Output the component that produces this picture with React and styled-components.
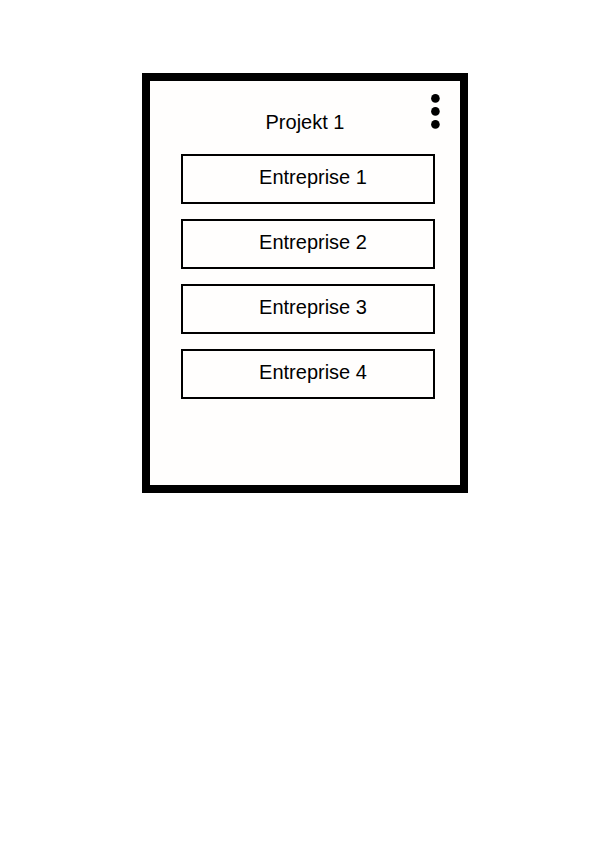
import React from "react";
import styled, { createGlobalStyle } from "styled-components";

const GlobalStyle = createGlobalStyle`
  *, *::before, *::after { box-sizing: border-box; }
  body {
    margin: 0;
    background: #ffffff;
    color: #000000;
    font-family: "Liberation Sans", Arial, sans-serif;
  }
`;

const Page = styled.main`
  display: flex;
  justify-content: center;
  padding: 73px 16px 16px 31px;
`;

const Card = styled.section`
  width: 100%;
  max-width: 326px;
  min-height: 420px;
  padding: 12px 20px 80px;
  border: 8px solid #000000;
  background: #fffefd;
`;

const CardHeader = styled.header`
  display: grid;
  grid-template-columns: 1fr auto 1fr;
  align-items: start;
  margin-bottom: 20px;
`;

const Title = styled.h1`
  grid-column: 2;
  margin: 0;
  padding-top: 17px;
  font-size: 20px;
  line-height: 24px;
  font-weight: 400;
`;

const MenuButton = styled.button`
  justify-self: end;
  display: flex;
  padding: 0;
  border: 0;
  background: transparent;
  color: inherit;
  cursor: pointer;
`;

const EntryList = styled.ul`
  display: flex;
  flex-direction: column;
  gap: 15px;
  margin: 0;
  padding: 0 5px 0 11px;
  list-style: none;
`;

const EntryButton = styled.button`
  display: block;
  width: 100%;
  height: 50px;
  padding: 0 0 4px 10px;
  border: 2px solid #000000;
  background: transparent;
  color: inherit;
  font: inherit;
  font-size: 20px;
  line-height: 24px;
  cursor: pointer;
`;

const entries = ["Entreprise 1", "Entreprise 2", "Entreprise 3", "Entreprise 4"];

function MoreIcon() {
  return (
    <svg width="10" height="36" viewBox="0 0 10 36" fill="currentColor" aria-hidden="true">
      <circle cx="5.4" cy="5.4" r="4.3" />
      <circle cx="5.4" cy="18.4" r="4.3" />
      <circle cx="5.4" cy="31.4" r="4.3" />
    </svg>
  );
}

export default function App() {
  return (
    <>
      <GlobalStyle />
      <Page>
        <Card>
          <CardHeader>
            <Title>Projekt 1</Title>
            <MenuButton type="button" aria-label="Menu">
              <MoreIcon />
            </MenuButton>
          </CardHeader>
          <EntryList>
            {entries.map((name) => (
              <li key={name}>
                <EntryButton type="button">{name}</EntryButton>
              </li>
            ))}
          </EntryList>
        </Card>
      </Page>
    </>
  );
}
